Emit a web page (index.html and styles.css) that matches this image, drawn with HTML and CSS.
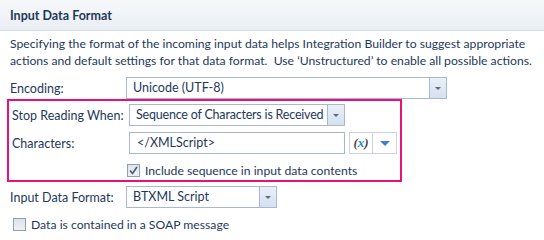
FILE: index.html
```html
<!DOCTYPE html>
<html lang="en">
<head>
  <meta charset="utf-8">
  <title>Input Data Format</title>
  <link rel="stylesheet" href="styles.css">
</head>
<body>
  <div class="panel">
    <div class="panel-head">Input Data Format</div>
    <div class="panel-body">
      <p class="desc">Specifying the format of the incoming input data helps Integration Builder to suggest appropriate<br>actions and default settings for that data format.&nbsp; Use &lsquo;Unstructured&rsquo; to enable all possible actions.</p>

      <div class="row encoding-row">
        <label class="lbl">Encoding:</label>
        <div class="combo combo-wide">
          <span class="combo-text">Unicode (UTF-8)</span>
          <span class="combo-btn"><i class="tri"></i></span>
        </div>
      </div>

      <div class="highlight">
        <div class="row">
          <label class="lbl">Stop Reading When:</label>
          <div class="combo combo-mid">
            <span class="combo-text">Sequence of Characters is Received</span>
            <span class="combo-btn"><i class="tri"></i></span>
          </div>
        </div>
        <div class="row">
          <label class="lbl">Characters:</label>
          <div class="textbox">&lt;/XMLScript&gt;</div>
          <div class="var-btns">
            <span class="var-x"><b>(</b><em>x</em><b>)</b></span>
            <span class="var-drop"><i class="tri-blue"></i></span>
          </div>
        </div>
        <div class="row check-row">
          <span class="chk checked">
            <svg width="9" height="9" viewBox="0 0 9 9"><path d="M1 4.5 L3.5 7.5 L8 1" fill="none" stroke="#4a5a70" stroke-width="1.6"/></svg>
          </span>
          <span class="chk-text">Include sequence in input data contents</span>
        </div>
      </div>

      <div class="row format-row">
        <label class="lbl">Input Data Format:</label>
        <div class="combo combo-small">
          <span class="combo-text">BTXML Script</span>
          <span class="combo-btn"><i class="tri"></i></span>
        </div>
      </div>

      <div class="row soap-row">
        <span class="chk"></span>
        <span class="chk-text">Data is contained in a SOAP message</span>
      </div>
    </div>
  </div>
</body>
</html>
```

FILE: styles.css
```css
html,
body {
  margin: 0;
  padding: 0;
  background: #fff;
}

body {
  font-family: Lato, "Liberation Sans", sans-serif;
  font-size: 12px;
  color: #1e395b;
}

.panel {
  width: 544px;
  height: 240px;
  overflow: hidden;
}

.panel-head {
  height: 30px;
  line-height: 31px;
  padding-left: 10px;
  font-weight: bold;
  font-size: 12.5px;
  background: linear-gradient(#f7f9fb, #e9eef4);
  border-bottom: 1px solid #d3dbe6;
  color: #1e395b;
}

.desc {
  margin: 4px 0 0 10px;
  line-height: 17px;
  white-space: nowrap;
  font-size: 12.2px;
  color: #1e395b;
}

.row {
  display: flex;
  align-items: center;
  height: 22px;
}

.lbl {
  width: 116px;
  padding-left: 10px;
  flex: none;
  font-size: 12.5px;
}

.combo {
  display: flex;
  height: 22px;
  box-sizing: border-box;
  border: 1px solid #a7b8cf;
  background: #fff;
}

.combo-text {
  flex: 1;
  padding-left: 6px;
  line-height: 20px;
  white-space: nowrap;
  overflow: hidden;
  font-size: 12.5px;
}

.combo-btn {
  width: 16px;
  border-left: 1px solid #a7b8cf;
  background: linear-gradient(#e9f0f8, #d4e1f0);
  display: flex;
  align-items: center;
  justify-content: center;
}

.tri {
  width: 0;
  height: 0;
  border-left: 3px solid transparent;
  border-right: 3px solid transparent;
  border-top: 3px solid #5a6a80;
}

.encoding-row {
  margin-top: 8px;
}

.combo-wide {
  width: 321px;
}

.highlight {
  margin: 0 0 0 7px;
  width: 395px;
  box-sizing: border-box;
  border: 2px solid #ea1078;
  padding: 3px 0 0 0;
}

.highlight .lbl {
  width: 117px;
  padding-left: 3px;
}

.highlight .row + .row {
  margin-top: 6px;
}

.combo-mid {
  width: 216px;
}

.combo-mid .combo-text {
  letter-spacing: -0.2px;
}

.textbox {
  width: 216px;
  height: 22px;
  box-sizing: border-box;
  border: 1px solid #a7b8cf;
  line-height: 20px;
  padding-left: 7px;
  font-size: 12.5px;
}

.var-btns {
  display: flex;
  margin-left: 4px;
  height: 22px;
  box-sizing: border-box;
  border: 1px solid #cfd3d8;
  background: #fff;
}

.var-x {
  width: 22px;
  border-right: 1px solid #cfd3d8;
  display: flex;
  align-items: center;
  justify-content: center;
  font-family: "Liberation Serif", serif;
  font-size: 13px;
}

.var-x b {
  color: #444;
  font-style: italic;
}

.var-x em {
  color: #1a8fc8;
  font-weight: bold;
}

.var-drop {
  width: 23px;
  display: flex;
  align-items: center;
  justify-content: center;
}

.tri-blue {
  width: 0;
  height: 0;
  border-left: 5px solid transparent;
  border-right: 5px solid transparent;
  border-top: 5px solid #3d7fd0;
}

.highlight .check-row {
  padding-left: 118px;
  height: 20px;
}

.chk {
  width: 13px;
  height: 13px;
  box-sizing: border-box;
  border: 1px solid #8f9fb4;
  background: linear-gradient(#dfe3e8, #eef0f3);
  display: flex;
  align-items: center;
  justify-content: center;
  flex: none;
}

.chk-text {
  margin-left: 5px;
  font-size: 12.2px;
}

.format-row {
  margin-top: 4px;
}

.combo-small {
  width: 151px;
}

.soap-row {
  padding-left: 13px;
  margin-top: 5px;
}
```
